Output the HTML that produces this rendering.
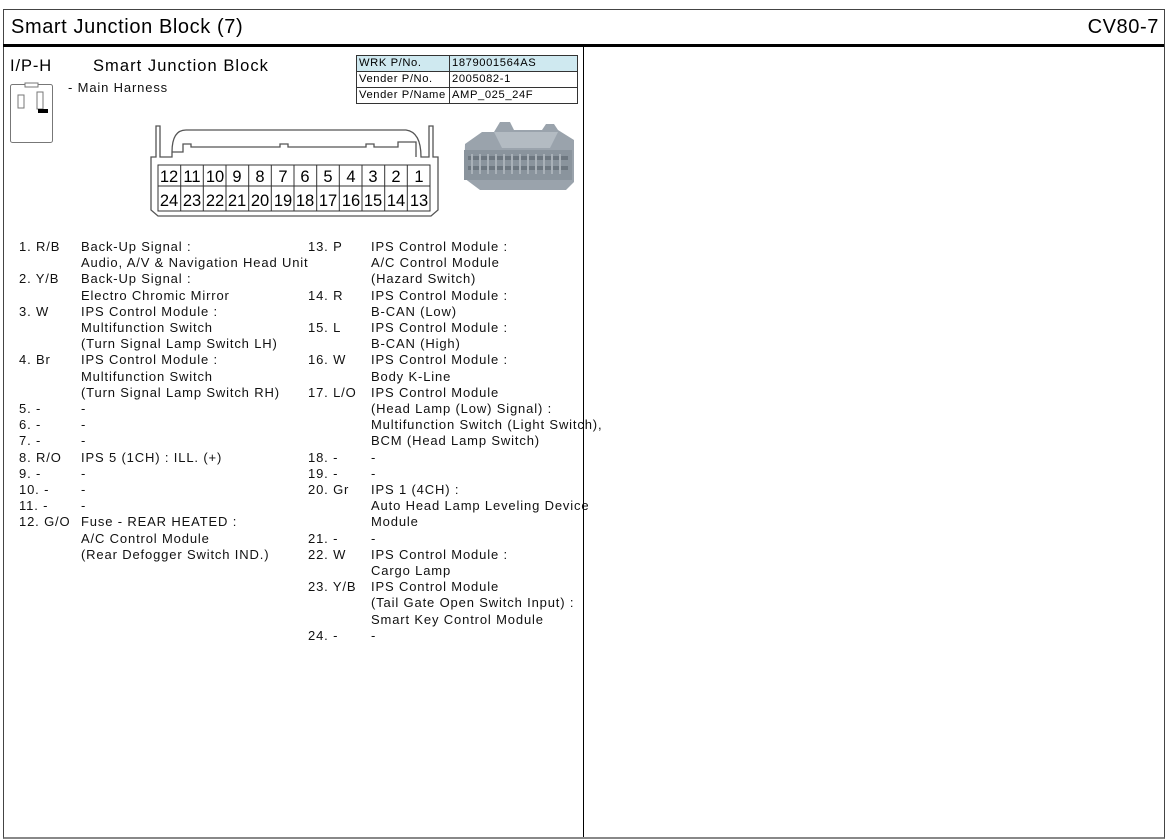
<!DOCTYPE html>
<html><head><meta charset="utf-8">
<style>
body{margin:0;width:1172px;height:840px;background:#fff;position:relative;overflow:hidden;font-family:"Liberation Sans",sans-serif;color:#000}
.a{position:absolute;white-space:nowrap}
.t{font-size:13px;letter-spacing:0.85px;color:#111}
table{border-collapse:collapse;position:absolute;left:356px;top:55px;font-size:11.2px;letter-spacing:0.6px;table-layout:fixed;width:222px;white-space:nowrap}
td{border:1px solid #333;padding:0 2px;height:15px;line-height:15px;overflow:hidden}
</style></head><body>
<div class="a" style="left:3px;top:9px;width:1160px;height:827px;border:1px solid #444;border-bottom:2px solid #888"></div>
<div class="a" style="left:3px;top:44px;width:1161px;height:3px;background:#000"></div>
<div class="a" style="left:583px;top:46px;width:1px;height:791px;background:#000"></div>
<div class="a" style="left:11px;top:16px;font-size:20px;letter-spacing:0.6px">Smart Junction Block (7)</div>
<div class="a" style="right:13px;top:16px;font-size:20px;letter-spacing:0.6px">CV80-7</div>
<div class="a" style="left:10px;top:57px;font-size:16.5px;letter-spacing:0.9px">I/P-H</div>
<div class="a" style="left:93px;top:57px;font-size:16.5px;letter-spacing:1.05px">Smart Junction Block</div>
<div class="a t" style="left:68px;top:80px">- Main Harness</div>
<svg class="a" style="left:9px;top:82px" width="46" height="62"><rect x="1.5" y="2.5" width="42" height="58" rx="2" fill="none" stroke="#777"/><rect x="16" y="1" width="13" height="4" fill="#fff" stroke="#777"/><rect x="9" y="13" width="6" height="13" fill="none" stroke="#777"/><rect x="28" y="10" width="6" height="17" fill="none" stroke="#777"/><rect x="29" y="27" width="10" height="4" fill="#000"/></svg>
<table><colgroup><col style="width:93px"><col></colgroup><tr style="background:#cfe9f0"><td>WRK P/No.</td><td>1879001564AS</td></tr><tr><td>Vender P/No.</td><td>2005082-1</td></tr><tr><td style="overflow:visible">Vender P/Name</td><td>AMP_025_24F</td></tr></table>
<svg class="a" style="left:148px;top:122px" width="295" height="98">
<g fill="none" stroke="#555" stroke-width="1.3">
<path d="M8 4 V35 H3 V88 L10 94 H283 L290 88 V35 H285 V4 H281 V35 H273 Q273 10 258 8 H38 Q24 8 24 30 V35 H12 V4 Z"/>
<path d="M24 30 H35 V22 H43 V25 H132 V22 H140 V25 H218 V22 H226 V25 H250 V20 H268 V35"/>
</g>
<g stroke="#333" fill="none" stroke-width="1"><rect x="10" y="43" width="272" height="46"/><line x1="10" y1="64" x2="282" y2="64"/>
<path d="M32.7 43V89M55.3 43V89M78 43V89M100.7 43V89M123.3 43V89M146 43V89M168.7 43V89M191.3 43V89M214 43V89M236.7 43V89M259.3 43V89"/></g>
<g font-family="Liberation Sans" font-size="16.5" text-anchor="middle" fill="#000">
<text x="21" y="60">12</text><text x="44" y="60">11</text><text x="67" y="60">10</text><text x="89" y="60">9</text><text x="112" y="60">8</text><text x="135" y="60">7</text><text x="157" y="60">6</text><text x="180" y="60">5</text><text x="203" y="60">4</text><text x="225" y="60">3</text><text x="248" y="60">2</text><text x="271" y="60">1</text>
<text x="21" y="84">24</text><text x="44" y="84">23</text><text x="67" y="84">22</text><text x="89" y="84">21</text><text x="112" y="84">20</text><text x="135" y="84">19</text><text x="157" y="84">18</text><text x="180" y="84">17</text><text x="203" y="84">16</text><text x="225" y="84">15</text><text x="248" y="84">14</text><text x="271" y="84">13</text></g>
</svg>
<svg class="a" style="left:462px;top:118px" width="116" height="76">
<path d="M3 26 L20 14 H32 L38 4 H48 L52 12 H80 L84 6 H92 L96 12 L112 22 V64 L104 72 H18 L2 60 Z" fill="#9aa3ac"/>
<path d="M2 32 H110 V62 H2 Z" fill="#8a949d"/>
<path d="M32 14 L40 30 H88 L96 14" fill="#b3bbc2"/>
<g fill="#6d7780"><path d="M6 38h100v4H6zM6 48h100v4H6z"/></g>
<g stroke="#a9b1b8" stroke-width="2"><path d="M10 36v20M18 36v20M26 36v20M34 36v20M42 36v20M50 36v20M58 36v20M66 36v20M74 36v20M82 36v20M90 36v20M98 36v20"/></g>
</svg>
<div class="a t" style="left:19px;top:239px;line-height:16.2px">1. R/B<br><br>2. Y/B<br><br>3. W<br><br><br>4. Br<br><br><br>5. -<br>6. -<br>7. -<br>8. R/O<br>9. -<br>10. -<br>11. -<br>12. G/O</div>
<div class="a t" style="left:81px;top:239px;line-height:16.2px">Back-Up Signal :<br>Audio, A/V &amp; Navigation Head Unit<br>Back-Up Signal :<br>Electro Chromic Mirror<br>IPS Control Module :<br>Multifunction Switch<br>(Turn Signal Lamp Switch LH)<br>IPS Control Module :<br>Multifunction Switch<br>(Turn Signal Lamp Switch RH)<br>-<br>-<br>-<br>IPS 5 (1CH) : ILL. (+)<br>-<br>-<br>-<br>Fuse - REAR HEATED :<br>A/C Control Module<br>(Rear Defogger Switch IND.)</div>
<div class="a t" style="left:308px;top:239px;line-height:16.2px">13. P<br><br><br>14. R<br><br>15. L<br><br>16. W<br><br>17. L/O<br><br><br><br>18. -<br>19. -<br>20. Gr<br><br><br>21. -<br>22. W<br><br>23. Y/B<br><br><br>24. -</div>
<div class="a t" style="left:371px;top:239px;line-height:16.2px">IPS Control Module :<br>A/C Control Module<br>(Hazard Switch)<br>IPS Control Module :<br>B-CAN (Low)<br>IPS Control Module :<br>B-CAN (High)<br>IPS Control Module :<br>Body K-Line<br>IPS Control Module<br>(Head Lamp (Low) Signal) :<br>Multifunction Switch (Light Switch),<br>BCM (Head Lamp Switch)<br>-<br>-<br>IPS 1 (4CH) :<br>Auto Head Lamp Leveling Device<br>Module<br>-<br>IPS Control Module :<br>Cargo Lamp<br>IPS Control Module<br>(Tail Gate Open Switch Input) :<br>Smart Key Control Module<br>-</div>
</body></html>
